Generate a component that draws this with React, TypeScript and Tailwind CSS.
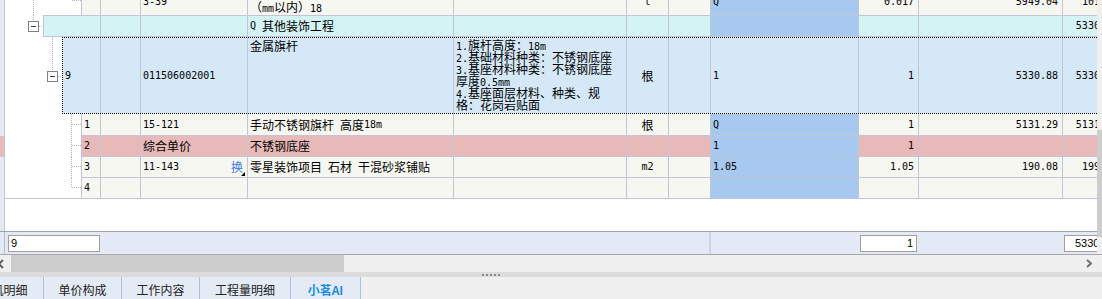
import type { ReactNode } from 'react';

// grid line + tree connector colours
const DOT = '#b4b4ca';

type Align = 'l' | 'c' | 'r';

// columns after the row-number column: blank, code, name, features, unit, blank, expression, qty, price, total
const COLS: { w: string; align: Align; blue?: boolean }[] = [
  { w: 'w-[40px]', align: 'l' },
  { w: 'w-[107px]', align: 'l' },
  { w: 'w-[206px]', align: 'l' },
  { w: 'w-[173px]', align: 'l' },
  { w: 'w-[42px]', align: 'c' },
  { w: 'w-[42px]', align: 'l' },
  { w: 'w-[148px]', align: 'l', blue: true },
  { w: 'w-[60px]', align: 'r' },
  { w: 'w-[144px]', align: 'r' },
  { w: 'w-[60px]', align: 'r' },
];

const ALIGN: Record<Align, string> = {
  l: 'justify-start pl-[2px]',
  c: 'justify-center',
  r: 'justify-end pr-[4px]',
};

// ascii runs get a narrow mono face so digits sit like the original bitmap font
function Txt({ s }: { s: string }) {
  return (
    <>
      {s
        .split(/([\x20-\x7e]+)/)
        .filter(Boolean)
        .map((p, i) =>
          /^[\x20-\x7e]+$/.test(p) ? (
            <span key={i} className="font-['DejaVu_Sans_Mono',monospace] text-[10px]">
              {p}
            </span>
          ) : (
            <span key={i}>{p}</span>
          )
        )}
    </>
  );
}

function VLine({ x, y1, y2 }: { x: number; y1: number; y2: number }) {
  return <line x1={x} x2={x} y1={y1} y2={y2} stroke={DOT} strokeDasharray="1 1" />;
}

function HLine({ y, x1, x2 }: { y: number; x1: number; x2: number }) {
  return <line x1={x1} x2={x2} y1={y} y2={y} stroke={DOT} strokeDasharray="1 1" />;
}

function MinusBox({ x, y }: { x: number; y: number }) {
  return (
    <g>
      <rect x={x + 0.5} y={y + 0.5} width={10} height={10} fill="white" stroke="#808080" />
      <line x1={x + 3} x2={x + 8} y1={y + 5.5} y2={y + 5.5} stroke="#404040" />
    </g>
  );
}

function Tree({ w, h, children }: { w: number; h: number; children: ReactNode }) {
  return (
    <svg width={w} height={h} shapeRendering="crispEdges" className="block">
      {children}
    </svg>
  );
}

type RowProps = {
  h: string;
  treeW: string;
  aW: string;
  a?: string;
  cells: ReactNode[];
  bg: string;
  hBg?: string;
  edge?: string;
  aEdge?: string;
  valign?: string;
  strip?: string;
  tree: ReactNode;
  treeEdge?: string;
  focus?: boolean;
};

function Row({
  h,
  treeW,
  aW,
  a,
  cells,
  bg,
  hBg = 'bg-[#a8c9ef]',
  edge = 'border-b border-b-[#c4c4d8]',
  aEdge = 'border-l-[#c4c4d8]',
  valign = 'items-center',
  strip = 'bg-[#e4ebf5]',
  tree,
  treeEdge = '',
  focus = false,
}: RowProps) {
  return (
    <div className={`relative flex w-max shrink-0 ${h}`}>
      <div className={`w-[5px] shrink-0 border-r border-r-[#c4c4d8] ${strip}`} />
      <div className={`${treeW} shrink-0 bg-white ${treeEdge}`}>{tree}</div>
      <div
        className={`${aW} flex shrink-0 overflow-hidden whitespace-pre border-l border-r border-r-[#c4c4d8] pl-[2px] ${aEdge} ${edge} ${bg} ${valign}`}
      >
        {a && <Txt s={a} />}
      </div>
      {COLS.map((c, i) => {
        const v = cells[i];
        return (
          <div
            key={i}
            className={`${c.w} flex shrink-0 overflow-hidden whitespace-pre border-r border-r-[#c4c4d8] ${edge} ${ALIGN[c.align]} ${valign} ${
              c.blue ? hBg : bg
            }`}
          >
            {typeof v === 'string' ? v && <Txt s={v} /> : v}
          </div>
        );
      })}
      {focus && (
        <div className="pointer-events-none absolute inset-y-0 right-0 left-[62px] border border-dotted border-black" />
      )}
    </div>
  );
}

const FEATURES = [
  '1.旗杆高度：18m',
  '2.基础材料种类：不锈钢底座',
  '3.基座材料种类：不锈钢底座',
  '厚度0.5mm',
  '4.基座面层材料、种类、规',
  '格：花岗岩贴面',
];

const TABS = [
  { label: '人材机明细', w: 'w-[92px] -ml-[48px]' },
  { label: '单价构成', w: 'w-[78px]' },
  { label: '工作内容', w: 'w-[78px]' },
  { label: '工程量明细', w: 'w-[91px]' },
  { label: '小茗AI', w: 'w-[70px]', active: true },
];

function up(s: string) {
  return (
    <span className="-mt-[7px] leading-[14px]">
      <Txt s={s} />
    </span>
  );
}

function ChildTree({ h, mid, last = false }: { h: number; mid: number; last?: boolean }) {
  return (
    <Tree w={76} h={h}>
      <VLine x={66.5} y1={0} y2={last ? mid : h} />
      <HLine y={mid} x1={67} x2={76} />
    </Tree>
  );
}

export default function App() {
  return (
    <div className="h-[299px] w-[1102px] overflow-hidden bg-white font-['Noto_Sans_CJK_SC','Noto_Sans',sans-serif] text-[12px] leading-[14px] text-black">
      <div className="flex h-[254px]">
        <div className="flex h-full w-[1097px] flex-col overflow-hidden">
          {/* grid */}
          <div className="flex h-[231px] flex-col overflow-hidden">
            <Row
              h="h-[15px]"
              treeW="w-[76px]"
              aW="w-[20px]"
              a=""
              valign="items-start"
              edge=""
              bg="bg-[#f7f7f2]"
              tree={
                <Tree w={76} h={15}>
                  <VLine x={28.5} y1={0} y2={15} />
                  <HLine y={0.5} x1={67} x2={76} />
                </Tree>
              }
              cells={[
                '',
                up('3-39'),
                <span className="leading-[14px]">
                  <Txt s="（mm以内）18" />
                </span>,
                '',
                up('t'),
                '',
                up('Q'),
                up('0.017'),
                up('5949.04'),
                up('101.13'),
              ]}
            />
            <Row
              h="h-[22px]"
              treeW="w-[38px]"
              aW="w-[58px]"
              edge="border-y border-y-[#c4c4d8]"
              bg="bg-[#d4f3f4]"
              tree={
                <Tree w={38} h={22}>
                  <VLine x={28.5} y1={0} y2={6} />
                  <MinusBox x={23} y={6} />
                  <HLine y={11.5} x1={34} x2={38} />
                </Tree>
              }
              cells={['', '', 'Q 其他装饰工程', '', '', '', '', '', '', '5330.88']}
            />
            <Row
              h="h-[77px]"
              treeW="w-[57px]"
              aW="w-[39px]"
              a="9"
              edge="border-y border-y-white"
              aEdge="border-l-white"
              bg="bg-[#d5e8f8]"
              hBg="bg-[#d5e8f8]"
              focus
              tree={
                <Tree w={57} h={77}>
                  <VLine x={47.5} y1={0} y2={34} />
                  <MinusBox x={42} y={34} />
                  <HLine y={39.5} x1={53} x2={57} />
                </Tree>
              }
              cells={[
                '',
                '011506002001',
                <div className="self-start pt-[2px] leading-[12px]">金属旗杆</div>,
                <div className="self-start pt-[1px]">
                  {FEATURES.map((l) => (
                    <div key={l} className="h-[12px] leading-[12px]">
                      <Txt s={l} />
                    </div>
                  ))}
                </div>,
                '根',
                '',
                '1',
                '1',
                '5330.88',
                '5330.88',
              ]}
            />
            <Row
              h="h-[22px]"
              treeW="w-[76px]"
              aW="w-[20px]"
              a="1"
              bg="bg-[#f7f7f2]"
              tree={<ChildTree h={22} mid={10.5} />}
              cells={['', '15-121', '手动不锈钢旗杆 高度18m', '', '根', '', 'Q', '1', '5131.29', '5131.29']}
            />
            <Row
              h="h-[21px]"
              treeW="w-[76px]"
              aW="w-[20px]"
              a="2"
              strip="bg-[#e8b9b9]"
              bg="bg-[#e8b9b9]"
              tree={<ChildTree h={21} mid={9.5} />}
              cells={['', '综合单价', '不锈钢底座', '', '', '', '1', '1', '', '']}
            />
            <Row
              h="h-[21px]"
              treeW="w-[76px]"
              aW="w-[20px]"
              a="3"
              bg="bg-[#f7f7f2]"
              tree={<ChildTree h={21} mid={9.5} />}
              cells={[
                '',
                <div className="relative flex w-full items-center self-stretch">
                  <Txt s="11-143" />
                  <span className="ml-auto mr-[4px] text-[#3a78ee]">换</span>
                  <svg className="absolute right-[2px] bottom-[1px]" width="4" height="4">
                    <polygon points="4,0 4,4 0,4" fill="#000" />
                  </svg>
                </div>,
                '零星装饰项目 石材 干混砂浆铺贴',
                '',
                'm2',
                '',
                '1.05',
                '1.05',
                '190.08',
                '199.58',
              ]}
            />
            <Row
              h="h-[21px]"
              treeW="w-[76px]"
              aW="w-[20px]"
              a="4"
              bg="bg-[#f7f7f2]"
              treeEdge="border-b border-b-[#c4c4d8]"
              tree={<ChildTree h={20} mid={9.5} last />}
              cells={['', '', '', '', '', '', '', '', '', '']}
            />
            <div className="flex flex-1">
              <div className="w-[5px] border-r border-r-[#c4c4d8] bg-[#e4ebf5]" />
            </div>
          </div>

          {/* totals bar */}
          <div className="flex h-[23px] shrink-0 items-start border-t border-[#a0a0a0] bg-[#e3eaf6] font-['Liberation_Sans',sans-serif] text-[11px] leading-[15px]">
            <div className="h-full w-[5px] shrink-0 border-r border-[#b8bcd0]" />
            <div className="ml-[3px] mt-[3px] h-[17px] w-[92px] shrink-0 border border-[#a0a0a0] bg-white pl-[2px]">9</div>
            <div className="w-[609px] shrink-0" />
            <div className="h-full w-[2px] shrink-0 bg-[#cfd1e8]" />
            <div className="w-[149px] shrink-0" />
            <div className="mt-[3px] h-[17px] w-[57px] shrink-0 border border-[#a0a0a0] bg-white pr-[3px] text-right">1</div>
            <div className="w-[147px] shrink-0" />
            <div className="mt-[3px] h-[17px] w-[66px] shrink-0 whitespace-nowrap border border-[#a0a0a0] bg-white pl-[10px]">5330.88</div>
          </div>
        </div>

        {/* vertical scrollbar */}
        <div className="flex h-full w-[5px] flex-col bg-[#f0f0f0]">
          <div className="mt-[130px] h-[107px] bg-[#cdcdcd]" />
        </div>
      </div>

      {/* horizontal scrollbar */}
      <div className="flex h-[18px] items-center border-t border-[#a8a8a8] bg-[#f0f0f0]">
        <svg width="6" height="10" className="-ml-[2px] shrink-0">
          <polyline points="5,1 1,5 5,9" fill="none" stroke="#606060" strokeWidth="2" />
        </svg>
        <div className="ml-[7px] w-[333px] self-stretch bg-[#cdcdcd]" />
        <svg width="6" height="9" className="ml-auto mr-[10px] shrink-0">
          <polyline points="1,1 5,4.5 1,8" fill="none" stroke="#707070" strokeWidth="2" />
        </svg>
      </div>

      {/* splitter */}
      <div className="flex h-[5px] items-center gap-[2px] bg-[#dcdcdc] pl-[482px]">
        {[0, 1, 2, 3, 4].map((i) => (
          <div key={i} className="h-[2px] w-[2px] bg-[#8c8c8c]" />
        ))}
      </div>

      {/* bottom tabs */}
      <div className="flex h-[22px] bg-[#f0f0f0]">
        {TABS.map((t) => (
          <div
            key={t.label}
            className={`${t.w} flex shrink-0 items-center justify-center border-r border-[#a9c2de] bg-[#e4ebf5] pt-[3px] ${
              t.active ? 'font-bold text-[#1e8ee2]' : 'text-[#222222]'
            }`}
          >
            {t.label}
          </div>
        ))}
      </div>
    </div>
  );
}
